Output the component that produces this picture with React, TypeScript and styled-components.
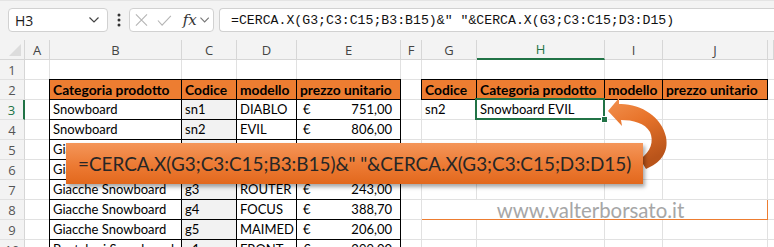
import { Fragment } from 'react';
import styled, { createGlobalStyle, css } from 'styled-components';

const GlobalStyle = createGlobalStyle`
  html, body {
    margin: 0;
    padding: 0;
    background: #f3f3f3;
    overflow: hidden;
  }
`;

const Window = styled.div`
  width: 774px;
  height: 247px;
  overflow: hidden;
  background: #f3f3f3;
  font-family: 'Open Sans', 'Noto Sans', sans-serif;
`;

const FormulaBar = styled.div`
  display: flex;
  align-items: flex-start;
  height: 40px;
  box-sizing: border-box;
  padding: 7px 0 0 8px;
  border-top: 1px solid #e4e4e4;
`;

const InputBox = styled.div`
  box-sizing: border-box;
  height: 24px;
  background: #fff;
  border: 1px solid #d1d1d1;
  border-radius: 4px;
  display: flex;
  align-items: center;
`;

const NameBox = styled(InputBox)`
  width: 100px;
  padding: 0 8px 0 6px;
  justify-content: space-between;
  font-size: 14px;
  color: #1b1b1b;
`;

const Dots = styled.div`
  width: 21px;
  height: 24px;
  display: flex;
  align-items: center;
  justify-content: center;
`;

const FxBox = styled(InputBox)`
  width: 85px;
  padding: 0 4px 0 5px;
  gap: 9px;
`;

const Fx = styled.span`
  font-family: 'DejaVu Serif', 'Liberation Serif', serif;
  font-style: italic;
  font-size: 15px;
  color: #333;
  margin-left: 2px;
  margin-right: -6px;
`;

const FormulaInput = styled(InputBox)`
  flex: 1;
  margin-left: 5px;
  border-right: none;
  border-radius: 4px 0 0 4px;
  padding-left: 11px;
  font-family: 'Liberation Mono', monospace;
  font-size: 13.2px;
  color: #111;
  white-space: pre;
`;

const Sheet = styled.div`
  position: relative;
  display: grid;
  grid-template-columns: 25px 25px 132px 55px 60px 104px 21px 55px 128px 58px 105px 6px;
  grid-auto-rows: 20px;
  background: #fff;
`;

const Corner = styled.div`
  position: relative;
  background: #f3f3f3;
  border-right: 1px solid #d6d6d6;
  border-bottom: 1px solid #d6d6d6;
  &::after {
    content: '';
    position: absolute;
    right: 3px;
    bottom: 3px;
    border-style: solid;
    border-width: 0 0 12px 12px;
    border-color: transparent transparent #dcdcdc transparent;
  }
`;

const ColHead = styled.div<{ $active?: boolean }>`
  box-sizing: border-box;
  background: #f3f3f3;
  border-right: 1px solid #d6d6d6;
  border-bottom: 1px solid #d6d6d6;
  display: flex;
  align-items: center;
  justify-content: center;
  font-size: 13px;
  color: #444;
  ${(p) =>
    p.$active &&
    css`
      color: #217346;
      border-bottom: 2px solid #217346;
    `}
`;

const RowHead = styled.div<{ $active?: boolean }>`
  box-sizing: border-box;
  background: #f3f3f3;
  border-right: 1px solid #d6d6d6;
  border-bottom: 1px solid #e1e1e1;
  display: flex;
  align-items: center;
  justify-content: center;
  font-size: 13px;
  color: #555;
  ${(p) =>
    p.$active &&
    css`
      color: #217346;
      border-right: 2px solid #217346;
    `}
`;

type CellProps = {
  $head?: boolean;
  $box?: boolean;
  $left?: boolean;
  $top?: boolean;
  $grey?: boolean;
  $sel?: boolean;
};

const edgeShadow = (p: CellProps) => {
  const s: string[] = [];
  if (p.$left) s.push('-1px 0 0 #000');
  if (p.$top) s.push('0 -1px 0 #000');
  if (p.$left && p.$top) s.push('-1px -1px 0 #000');
  return s.length ? `box-shadow: ${s.join(', ')};` : '';
};

const Cell = styled.div<CellProps>`
  position: relative;
  box-sizing: border-box;
  border-right: 1px solid #e1e1e1;
  border-bottom: 1px solid #e1e1e1;
  padding: 0 3px;
  font-family: Lato, 'Liberation Sans', sans-serif;
  font-size: ${(p) => (p.$head ? '13.8px' : '13px')};
  line-height: 19px;
  color: #000;
  white-space: nowrap;
  background: ${(p) => (p.$head ? '#ed7d31' : p.$grey ? '#f2f2f2' : '#fff')};
  font-weight: ${(p) => (p.$head ? 700 : 400)};
  ${(p) =>
    p.$box &&
    css`
      border-right-color: #000;
      border-bottom-color: #000;
    `}
  ${(p) => edgeShadow(p)}
  ${(p) =>
    p.$sel &&
    css`
      z-index: 1;
      &::before {
        content: '';
        position: absolute;
        inset: -2px -1px -1px -2px;
        border: 2px solid #217346;
      }
      &::after {
        content: '';
        position: absolute;
        right: -4px;
        bottom: -4px;
        width: 5px;
        height: 5px;
        background: #217346;
        border: 1px solid #fff;
      }
    `}
`;

const Price = styled.div`
  display: flex;
  justify-content: space-between;
  padding: 0 5px 0 3px;
`;

const Watermark = styled.div`
  grid-column: span 4;
  box-sizing: border-box;
  margin: -1px 0 0 -1px;
  border: 1px solid #ed7d31;
  background: #fff;
  display: flex;
  align-items: center;
  justify-content: center;
  font-family: Lato, 'Liberation Sans', sans-serif;
  font-size: 20.4px;
  color: #a6a6a6;
  padding-right: 8px;
`;

const Callout = styled.div`
  position: absolute;
  left: 66px;
  top: 103px;
  width: 577px;
  height: 41px;
  box-sizing: border-box;
  padding-left: 12px;
  display: flex;
  align-items: center;
  background: linear-gradient(#f4965a, #ec7a33 55%, #e2681d);
  box-shadow: 2px 3px 4px rgba(0, 0, 0, 0.35);
  font-family: Lato, 'Liberation Sans', sans-serif;
  font-size: 18.9px;
  color: #262626;
  white-space: pre;
  z-index: 3;
`;

const Arrow = styled.svg`
  position: absolute;
  left: 600px;
  top: 55px;
  z-index: 2;
`;

const cols = ['A', 'B', 'C', 'D', 'E', 'F', 'G', 'H', 'I', 'J', 'K'];
const rows = [1, 2, 3, 4, 5, 6, 7, 8, 9, 10];

const data: Record<string, string> = {
  B2: 'Categoria prodotto',
  C2: 'Codice',
  D2: 'modello',
  E2: 'prezzo unitario',
  G2: 'Codice',
  H2: 'Categoria prodotto',
  I2: 'modello',
  J2: 'prezzo unitario',
  B3: 'Snowboard', C3: 'sn1', D3: 'DIABLO', E3: '751,00',
  B4: 'Snowboard', C4: 'sn2', D4: 'EVIL', E4: '806,00',
  B5: 'Giacche Snowboard', C5: 'g1', D5: 'ALPHA', E5: '312,00',
  B6: 'Giacche Snowboard', C6: 'g2', D6: 'STORM', E6: '275,50',
  B7: 'Giacche Snowboard', C7: 'g3', D7: 'ROUTER', E7: '243,00',
  B8: 'Giacche Snowboard', C8: 'g4', D8: 'FOCUS', E8: '388,70',
  B9: 'Giacche Snowboard', C9: 'g5', D9: 'MAIMED', E9: '206,00',
  B10: 'Pantaloni Snowboard', C10: 'p1', D10: 'FRONT', E10: '299,00',
  G3: 'sn2',
  H3: 'Snowboard EVIL',
};

const formula = '=CERCA.X(G3;C3:C15;B3:B15)&" "&CERCA.X(G3;C3:C15;D3:D15)';

const Chevron = ({ color = '#444' }: { color?: string }) => (
  <svg width="10" height="6" viewBox="0 0 10 6">
    <polyline points="0.5,0.5 5,5 9.5,0.5" fill="none" stroke={color} strokeWidth="1.2" />
  </svg>
);

const SheetCell = ({ c, r }: { c: string; r: number }) => {
  const inT1 = ['B', 'C', 'D', 'E'].includes(c) && r >= 2;
  const inT2 = ['G', 'H', 'I', 'J'].includes(c) && r === 2;
  const box = inT1 || inT2;
  const key = `${c}${r}`;
  const value = data[key];
  return (
    <Cell
      $head={r === 2 && box}
      $box={box}
      $left={box && (c === 'B' || c === 'G')}
      $top={r === 2 && box}
      $grey={c === 'C' && r >= 3}
      $sel={key === 'H3'}
    >
      {c === 'E' && r >= 3 ? (
        <Price>
          <span>€</span>
          <span>{value}</span>
        </Price>
      ) : (
        value
      )}
    </Cell>
  );
};

export default function App() {
  return (
    <Window>
      <GlobalStyle />
      <FormulaBar>
        <NameBox>
          <span>H3</span>
          <Chevron />
        </NameBox>
        <Dots>
          <svg width="4" height="14" viewBox="0 0 4 14">
            <circle cx="2" cy="2" r="1.5" fill="#333" />
            <circle cx="2" cy="7" r="1.5" fill="#333" />
            <circle cx="2" cy="12" r="1.5" fill="#333" />
          </svg>
        </Dots>
        <FxBox>
          <svg width="14" height="14" viewBox="0 0 14 14">
            <path d="M1 1 L13 13 M13 1 L1 13" stroke="#b5b5b5" strokeWidth="1.2" />
          </svg>
          <svg width="16" height="13" viewBox="0 0 16 13">
            <polyline points="1,6.5 5.5,11.5 15,1.5" fill="none" stroke="#b5b5b5" strokeWidth="1.2" />
          </svg>
          <Fx>fx</Fx>
          <Chevron color="#777" />
        </FxBox>
        <FormulaInput>{formula}</FormulaInput>
      </FormulaBar>

      <Sheet>
        <Corner />
        {cols.map((c) => (
          <ColHead key={c} $active={c === 'H'}>
            {c === 'K' ? '' : c}
          </ColHead>
        ))}
        {rows.map((r) => (
          <Fragment key={r}>
            <RowHead $active={r === 3}>{r}</RowHead>
            {cols.map((c) => {
              if (r === 8 && c === 'G') return <Watermark key={c}>www.valterborsato.it</Watermark>;
              if (r === 8 && ['H', 'I', 'J'].includes(c)) return null;
              return <SheetCell key={c} c={c} r={r} />;
            })}
          </Fragment>
        ))}

        <Arrow width="75" height="95" viewBox="0 0 75 95">
          <defs>
            <linearGradient id="arrowFill" x1="0" y1="0" x2="0.4" y2="1">
              <stop offset="0" stopColor="#f29250" />
              <stop offset="0.45" stopColor="#e8742b" />
              <stop offset="1" stopColor="#b9541a" />
            </linearGradient>
          </defs>
          <path
            d="M8 16 L19 3 L19 9 C40 8 62 22 66 42 C69 58 60 68 46 74 L40 64 C51 57 54 46 50 37 C45 28 33 25 21 25 L22 31 Z"
            fill="url(#arrowFill)"
          />
        </Arrow>
        <Callout>{formula}</Callout>
      </Sheet>
    </Window>
  );
}
